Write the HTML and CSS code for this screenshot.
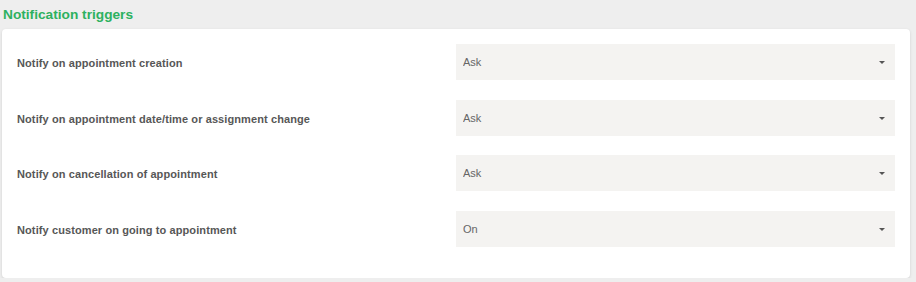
FILE: index.html
```html
<!DOCTYPE html>
<html lang="en">
<head>
  <meta charset="UTF-8" />
  <title>Notification triggers</title>
  <link rel="stylesheet" href="styles.css">
</head>
<body>

  <h2 class="section-title">Notification triggers</h2>

  <div class="card">
    <div class="form-row">
      <label for="on-create">Notify on appointment creation</label>
      <div class="select-wrap">
        <select id="on-create">
          <option>Ask</option>
          <option>On</option>
          <option>Off</option>
        </select>
      </div>
    </div>

    <div class="form-row">
      <label for="on-change">Notify on appointment date/time or assignment change</label>
      <div class="select-wrap">
        <select id="on-change">
          <option>Ask</option>
          <option>On</option>
          <option>Off</option>
        </select>
      </div>
    </div>

    <div class="form-row">
      <label for="on-cancel">Notify on cancellation of appointment</label>
      <div class="select-wrap">
        <select id="on-cancel">
          <option>Ask</option>
          <option>On</option>
          <option>Off</option>
        </select>
      </div>
    </div>

    <div class="form-row">
      <label for="on-going">Notify customer on going to appointment</label>
      <div class="select-wrap">
        <select id="on-going">
          <option>On</option>
          <option>Ask</option>
          <option>Off</option>
        </select>
      </div>
    </div>
  </div>

</body>
</html>
```

FILE: styles.css
```css
* {
  box-sizing: border-box;
  font-family: "Liberation Sans", Arial, sans-serif;
}
body {
  background-color: #eeeeee;
  margin: 0;
  padding: 0 6px 0 2px;
}
.section-title {
  margin: 0;
  padding: 7px 0 0 1px;
  height: 29px;
  font-size: 13.7px;
  font-weight: bold;
  color: #2db160;
}
.card {
  background: #ffffff;
  border-radius: 4px;
  box-shadow: 0 1px 3px rgba(0,0,0,0.13);
  padding: 15px 15px 11.5px;
}
.form-row {
  display: grid;
  grid-template-columns: 1fr 1fr;
  align-items: center;
  margin-bottom: 19.5px;
}
.form-row label {
  padding-top: 2px;
  font-size: 11px;
  font-weight: bold;
  letter-spacing: 0.1px;
  color: #575757;
}
.select-wrap {
  position: relative;
}
.select-wrap::after {
  content: "";
  position: absolute;
  right: 10px;
  top: 17px;
  border-left: 3px solid transparent;
  border-right: 3px solid transparent;
  border-top: 3px solid #555;
  pointer-events: none;
}
select {
  width: 100%;
  height: 36px;
  padding: 0 7px;
  border: none;
  border-radius: 0;
  background-color: #f4f3f1;
  color: #666;
  font-size: 11px;
  appearance: none;
  -webkit-appearance: none;
  outline: none;
}
```
